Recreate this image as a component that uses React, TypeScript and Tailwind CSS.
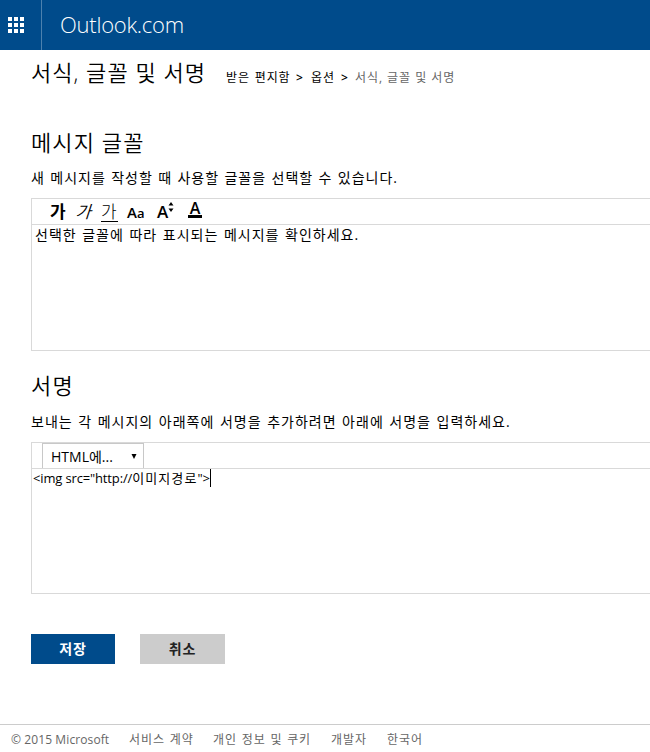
import React from "react";

const links = [
  { label: "© 2015 Microsoft", cls: "w-[118px] tracking-[0.1px]" },
  { label: "서비스 계약", cls: "w-[84px] tracking-[0.9px] [word-spacing:1px]" },
  { label: "개인 정보 및 쿠키", cls: "w-[118px] tracking-[0.9px] [word-spacing:0.8px]" },
  { label: "개발자", cls: "w-[56px] tracking-[0.9px]" },
  { label: "한국어", cls: "tracking-[0.9px]" },
];

function Header() {
  return (
    <header className="flex h-[50px] bg-[#004b8b] text-white">
      <div className="flex w-[42px] items-center border-r border-[#4d81ae] pl-2">
        <div className="grid grid-cols-3 gap-[2px]">
          {Array.from({ length: 9 }, (_, i) => (
            <span key={i} className="h-1 w-1 bg-white" />
          ))}
        </div>
      </div>
      <div className="pl-[18px] text-[22px] font-light leading-[48px] tracking-[-0.25px]">Outlook.com</div>
    </header>
  );
}

function FontToolbar() {
  return (
    <div className="flex h-[26px] items-start border-b border-[#d9d9d9] pl-[18px] text-black">
      <span className="w-[27px] text-[17px] font-bold leading-[26px]">가</span>
      <span className="w-[24px] -skew-x-[18deg] text-[17px] font-[350] leading-[26px]">가</span>
      <span className="mt-[4px] h-[19px] w-[17px] border-b border-black text-[17px] font-light leading-[18px]">가</span>
      <span className="ml-[9px] w-[30px] text-[15px] font-semibold leading-[26px]">
        A<span className="text-[13px]">a</span>
      </span>
      <span className="flex w-[31px]">
        <span className="text-[17px] font-semibold leading-[26px]">A</span>
        <svg className="mt-[3px] h-[10px] w-[6px]" viewBox="0 0 6 10">
          <path d="M0.5 3.5L3 0L5.5 3.5ZM0.5 6.5L3 10L5.5 6.5Z" fill="black" />
        </svg>
      </span>
      <span className="mt-[2px] h-[17px] w-[14px] border-b-[3px] border-black text-center text-[16px] font-semibold leading-[14px]">A</span>
    </div>
  );
}

export default function App() {
  return (
    <div className="h-[752px] w-[650px] overflow-hidden whitespace-nowrap bg-white font-['Open_Sans','Noto_Sans_CJK_KR',sans-serif] text-black">
      <Header />
      <main className="flex h-[674px] flex-col pl-[31px]">
        <div className="flex h-[48px]">
          <h1 className="w-[195px] text-[22px] font-[350] leading-[45px] tracking-[1.05px]">서식, 글꼴 및 서명</h1>
          <nav className="flex text-[12px] leading-[55px] tracking-[0.9px]">
            <span className="w-[70px] [word-spacing:0.8px]">받은 편지함</span>
            <span className="w-[15px] font-semibold">&gt;</span>
            <span className="w-[30px]">옵션</span>
            <span className="w-[14px] font-semibold">&gt;</span>
            <span className="text-[#666] [word-spacing:0.2px]">서식, 글꼴 및 서명</span>
          </nav>
        </div>
        <h2 className="mt-[30px] h-[30px] text-[22px] font-[350] leading-[29px] tracking-[1.1px]">메시지 글꼴</h2>
        <p className="mt-[10px] h-[20px] text-[14px] leading-[20px] tracking-[1px] [word-spacing:0.75px]">새 메시지를 작성할 때 사용할 글꼴을 선택할 수 있습니다.</p>
        <section className="mt-[10px] h-[153px] border border-r-0 border-[#d9d9d9]">
          <FontToolbar />
          <div className="pl-[3px] text-[14px] leading-[20px] tracking-[1px] [word-spacing:0.95px]">선택한 글꼴에 따라 표시되는 메시지를 확인하세요.</div>
        </section>
        <h2 className="mt-[20px] h-[30px] text-[22px] font-[350] leading-[29px] tracking-[1.3px]">서명</h2>
        <p className="mt-[11px] h-[20px] text-[14px] leading-[20px] tracking-[1px] [word-spacing:0.95px]">보내는 각 메시지의 아래쪽에 서명을 추가하려면 아래에 서명을 입력하세요.</p>
        <section className="mt-[10px] h-[152px] border border-r-0 border-[#d9d9d9]">
          <div className="flex h-[26px] border-b border-[#d9d9d9] pl-[10px]">
            <button className="flex h-[25px] w-[102px] items-center justify-between border border-b-0 border-[#c8c8c8] pl-2 pr-[6px] text-[14px]">
              <span>HTML에...</span>
              <svg className="h-[5px] w-[6px]" viewBox="0 0 6 5">
                <path d="M0.5 0H5.5L3 5Z" fill="black" />
              </svg>
            </button>
          </div>
          <div className="flex h-[18px] items-start pl-px text-[13px] leading-[18px] tracking-[-0.15px]">
            <span>&lt;img src="http://<span className="tracking-[1.1px]">이미지경로</span>"&gt;</span>
            <span className="h-[18px] w-px bg-black" />
          </div>
        </section>
        <div className="mt-[40px] flex gap-[25px] text-[14px] font-semibold tracking-[0.8px]">
          <button className="h-[30px] w-[84px] bg-[#004b8b] pb-[2px] text-white">저장</button>
          <button className="h-[30px] w-[85px] bg-[#ccc] pb-[2px] text-[#222]">취소</button>
        </div>
      </main>
      <footer className="flex h-[28px] border-t border-[#ccc] pl-[11px] text-[12px] leading-[30px] text-[#666]">
        {links.map((l) => (
          <span key={l.label} className={l.cls}>{l.label}</span>
        ))}
      </footer>
    </div>
  );
}
